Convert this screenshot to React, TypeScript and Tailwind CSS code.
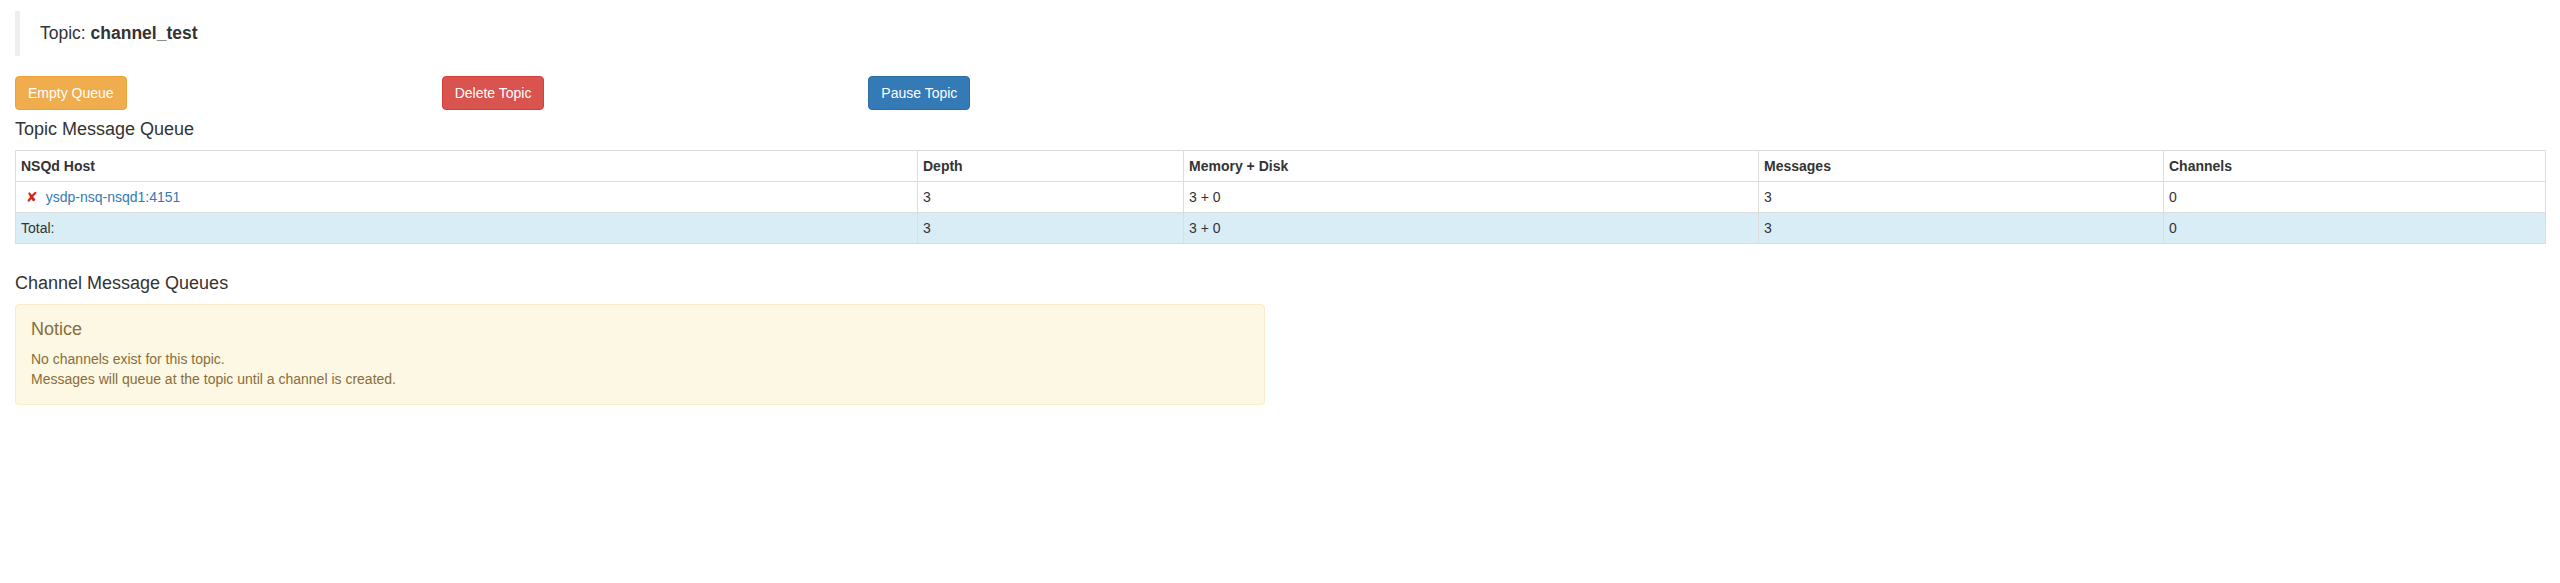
const font = "font-['Liberation_Sans','Helvetica_Neue',Arial,sans-serif]";

const hosts = [
  { name: "ysdp-nsq-nsqd1:4151", depth: "3", memDisk: "3 + 0", messages: "3", channels: "0" },
];

const ActionButton: React.FC<{ label: string; tone: string }> = ({ label, tone }) => {
  return (
    <div className="px-[15px]">
      <button
        className={`h-[34px] px-[12px] rounded-[4px] border text-[14px] leading-[20px] text-white ${tone}`}
      >
        {label}
      </button>
    </div>
  );
};

const Cell: React.FC<{ children: React.ReactNode; head?: boolean }> = ({ children, head }) => {
  if (head) {
    return (
      <th className="border border-[#ddd] p-[5px] text-left font-bold leading-[20px] align-bottom">
        {children}
      </th>
    );
  }
  return <td className="border border-[#ddd] p-[5px] leading-[20px] align-top">{children}</td>;
};

export default function App() {
  return (
    <div className={`${font} text-[14px] leading-[20px] text-[#333] bg-white w-[2560px] h-[583px]`}>
      <div className="px-[15px] pt-[11px]">
        <blockquote className="border-l-[5px] border-[#eee] py-[10px] px-[20px] text-[17.5px] leading-[25px] mb-[20px]">
          Topic: <strong className="font-bold">channel_test</strong>
        </blockquote>
      </div>

      <div className="grid grid-cols-6">
        <ActionButton label="Empty Queue" tone="bg-[#f0ad4e] border-[#eea236]" />
        <ActionButton label="Delete Topic" tone="bg-[#d9534f] border-[#d43f3a]" />
        <ActionButton label="Pause Topic" tone="bg-[#337ab7] border-[#2e6da4]" />
      </div>

      <div className="px-[15px]">
        <h4 className="text-[18px] leading-[19.8px] mt-[10px] mb-[10px] font-medium">Topic Message Queue</h4>
        <table className="w-[2530px] table-fixed border-collapse mb-[30px]">
          <colgroup>
            <col className="w-[902px]" />
            <col className="w-[266px]" />
            <col className="w-[575px]" />
            <col className="w-[405px]" />
            <col className="w-[382px]" />
          </colgroup>
          <thead>
            <tr>
              <Cell head>NSQd Host</Cell>
              <Cell head>Depth</Cell>
              <Cell head>Memory + Disk</Cell>
              <Cell head>Messages</Cell>
              <Cell head>Channels</Cell>
            </tr>
          </thead>
          <tbody>
            {hosts.map((h) => (
              <tr key={h.name}>
                <Cell>
                  <span className="inline-block ml-[5px] mr-[8px] text-[#d0281c] text-[14px] font-['DejaVu_Sans',sans-serif]">
                    ✘
                  </span>
                  <a href="#" className="text-[#337ab7]">
                    {h.name}
                  </a>
                </Cell>
                <Cell>{h.depth}</Cell>
                <Cell>{h.memDisk}</Cell>
                <Cell>{h.messages}</Cell>
                <Cell>{h.channels}</Cell>
              </tr>
            ))}
            <tr className="bg-[#d9edf7]">
              <Cell>Total:</Cell>
              <Cell>3</Cell>
              <Cell>3 + 0</Cell>
              <Cell>3</Cell>
              <Cell>0</Cell>
            </tr>
          </tbody>
        </table>

        <h4 className="text-[18px] leading-[19.8px] mb-[10px] font-medium">Channel Message Queues</h4>
      </div>

      <div className="w-1/2 px-[15px]">
        <div className="bg-[#fcf8e3] border border-[#faebcc] rounded-[4px] p-[15px] text-[#8a6d3b]">
          <h4 className="text-[18px] leading-[19.8px] mb-[10px] font-medium">Notice</h4>
          <p>
            No channels exist for this topic.
            <br />
            Messages will queue at the topic until a channel is created.
          </p>
        </div>
      </div>
    </div>
  );
}
